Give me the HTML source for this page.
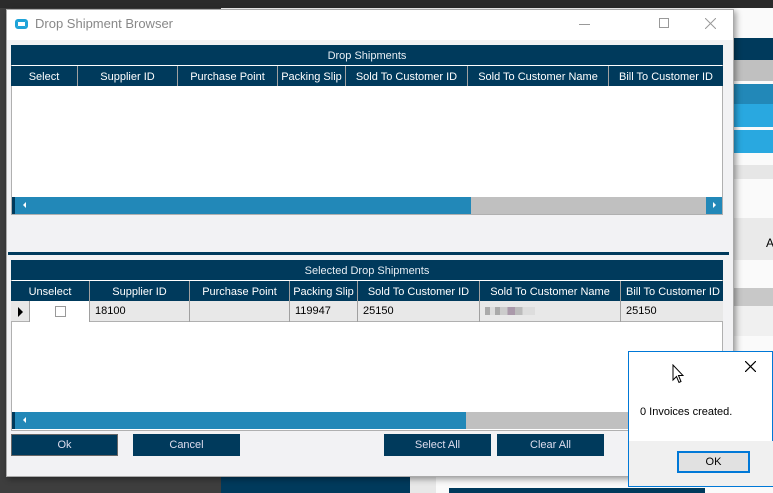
<!DOCTYPE html>
<html><head><style>
*{margin:0;padding:0;box-sizing:border-box}
body{width:773px;height:493px;overflow:hidden;position:relative;background:#3e3e3e;font-family:"Liberation Sans",Arial,sans-serif;font-size:11px}
.a{position:absolute}
.nav{background:#003a5c;color:#fff}
.hc{position:absolute;top:0;height:20px;line-height:22px;text-align:center;color:#fff;border-right:1px solid #a0a0a0;font-size:11px;white-space:nowrap;overflow:hidden}
.dc{position:absolute;top:0;height:21px;line-height:20px;border-right:1px solid #a0a0a0;padding-left:5px;font-size:11px;color:#000}
.btn{position:absolute;top:434px;height:22px;width:107px;background:#003a5c;color:#dde;text-align:center;line-height:23px;font-size:11px}
</style></head><body>
<div class="a" style="left:0;top:0;width:773px;height:8px;background:#2b2b2b"></div>
<div class="a" style="left:221px;top:8px;width:552px;height:485px;background:#fafafa"></div>
<div class="a" style="left:734px;top:38px;width:39px;height:22px;background:#003a5c"></div>
<div class="a" style="left:734px;top:60px;width:39px;height:21px;background:#c0c0c0"></div>
<div class="a" style="left:734px;top:84px;width:39px;height:20px;background:#2288b8"></div>
<div class="a" style="left:734px;top:104px;width:39px;height:23px;background:#29a8e0"></div>
<div class="a" style="left:734px;top:130px;width:39px;height:23px;background:#29a8e0"></div>
<div class="a" style="left:734px;top:165px;width:39px;height:14px;background:#e6e6e6"></div>
<div class="a" style="left:734px;top:218px;width:39px;height:42px;background:#eaeaea"></div>
<div class="a" style="left:766px;top:236px;font-size:12px">A</div>
<div class="a" style="left:734px;top:288px;width:39px;height:18px;background:#c8c8c8"></div>
<div class="a" style="left:734px;top:306px;width:39px;height:30px;background:#f0f0f0"></div>
<div class="a" style="left:449px;top:488px;width:256px;height:5px;background:#003a5c"></div>
<div class="a" style="left:221px;top:477px;width:190px;height:16px;background:#003a5c"></div>
<div class="a" style="left:410px;top:477px;width:26px;height:16px;background:#e8e8e8"></div>
<div class="a" style="left:6px;top:9px;width:728px;height:468px;background:#f2f2f4;border:1px solid #aaa;box-shadow:2px 2px 6px rgba(0,0,0,.4)"></div>
<div class="a" style="left:7px;top:10px;width:726px;height:30px;background:#fff"></div>
<div class="a" style="left:15px;top:19px;width:13px;height:10px;border-radius:3px;border:2px solid #1fa3d8;box-shadow:inset 0 0 0 1px #1fa3d8"></div>
<div class="a" style="left:35px;top:16px;font-size:13px;color:#888">Drop Shipment Browser</div>
<div class="a" style="left:579px;top:24px;width:11px;height:1px;background:#999"></div>
<div class="a" style="left:659px;top:18px;width:10px;height:10px;border:1px solid #999"></div>
<svg class="a" style="left:705px;top:18px" width="11" height="11"><path d="M0 0L11 11M11 0L0 11" stroke="#999" stroke-width="1"/></svg>
<div class="a" style="left:11px;top:45px;width:712px;height:170px;background:#fff;border:1px solid #b0b0b0"></div>
<div class="a nav" style="left:11px;top:45px;width:712px;height:20px;line-height:22px;text-align:center;color:#e8eef4">Drop Shipments</div>
<div class="a nav" style="left:11px;top:66px;width:712px;height:20px">
<div class="hc" style="left:0;width:67px">Select</div>
<div class="hc" style="left:67px;width:100px">Supplier ID</div>
<div class="hc" style="left:167px;width:100px">Purchase Point</div>
<div class="hc" style="left:267px;width:68px">Packing Slip</div>
<div class="hc" style="left:335px;width:122px">Sold To Customer ID</div>
<div class="hc" style="left:457px;width:141px">Sold To Customer Name</div>
<div class="hc" style="left:598px;width:114px;border:none">Bill To Customer ID</div>
</div>
<div class="a" style="left:12px;top:197px;width:710px;height:17px;background:#c0c0c0"></div>
<div class="a" style="left:12px;top:197px;width:459px;height:17px;background:#2288b8;border-left:3px solid #003a5c"></div>
<div class="a" style="left:23px;top:202px;width:0;height:0;border-top:3px solid transparent;border-bottom:3px solid transparent;border-right:3px solid #fff"></div>
<div class="a" style="left:706px;top:197px;width:16px;height:17px;background:#2288b8"></div>
<div class="a" style="left:713px;top:202px;width:0;height:0;border-top:3px solid transparent;border-bottom:3px solid transparent;border-left:3px solid #fff"></div>
<div class="a" style="left:8px;top:252px;width:721px;height:3px;background:#003a5c"></div>
<div class="a" style="left:11px;top:260px;width:712px;height:171px;background:#fff;border:1px solid #b0b0b0"></div>
<div class="a nav" style="left:11px;top:260px;width:712px;height:20px;line-height:22px;text-align:center;color:#e8eef4">Selected Drop Shipments</div>
<div class="a nav" style="left:11px;top:281px;width:712px;height:20px">
<div class="hc" style="left:0;width:79px">Unselect</div>
<div class="hc" style="left:79px;width:100px">Supplier ID</div>
<div class="hc" style="left:179px;width:100px">Purchase Point</div>
<div class="hc" style="left:279px;width:68px">Packing Slip</div>
<div class="hc" style="left:347px;width:122px">Sold To Customer ID</div>
<div class="hc" style="left:469px;width:141px">Sold To Customer Name</div>
<div class="hc" style="left:610px;width:102px;border:none;text-align:left;padding-left:5px">Bill To Customer ID</div>
</div>
<div class="a" style="left:11px;top:301px;width:712px;height:21px;background:#e8e8e8;border-bottom:1px solid #b0b0b0">
<div class="dc" style="left:0;width:19px"></div>
<div class="a" style="left:7px;top:6px;width:0;height:0;border-top:5px solid transparent;border-bottom:5px solid transparent;border-left:5px solid #000"></div>
<div class="dc" style="left:19px;width:60px;background:#fff"></div>
<div class="a" style="left:44px;top:5px;width:11px;height:11px;border:1px solid #999;background:#fff"></div>
<div class="dc" style="left:79px;width:100px">18100</div>
<div class="dc" style="left:179px;width:100px"></div>
<div class="dc" style="left:279px;width:68px">119947</div>
<div class="dc" style="left:347px;width:122px">25150</div>
<div class="dc" style="left:469px;width:141px"><span style="display:inline-block;margin-top:6px;width:50px;height:8px;background:linear-gradient(90deg,#aaa 0 10%,#ddd 10% 20%,#aaa 20% 30%,#ccc 30% 45%,#a9a 45% 60%,#bbb 60% 75%,#ddd 75%)"></span></div>
<div class="dc" style="left:610px;width:102px;border:none">25150</div>
</div>
<div class="a" style="left:12px;top:412px;width:710px;height:17px;background:#c0c0c0"></div>
<div class="a" style="left:12px;top:412px;width:454px;height:17px;background:#2288b8;border-left:3px solid #003a5c"></div>
<div class="a" style="left:23px;top:417px;width:0;height:0;border-top:3px solid transparent;border-bottom:3px solid transparent;border-right:3px solid #fff"></div>
<div class="btn" style="left:11px;border:1px solid #666;line-height:21px">Ok</div>
<div class="btn" style="left:133px">Cancel</div>
<div class="btn" style="left:384px">Select All</div>
<div class="btn" style="left:497px">Clear All</div>
<div class="a" style="left:628px;top:351px;width:145px;height:136px;background:#fff;border:1px solid #0078d7"></div>
<div class="a" style="left:629px;top:441px;width:144px;height:45px;background:#f0f0f0"></div>
<svg class="a" style="left:745px;top:361px" width="11" height="11"><path d="M0 0L11 11M11 0L0 11" stroke="#000" stroke-width="1.2"/></svg>
<svg class="a" style="left:672px;top:364px" width="12" height="20"><path d="M1 1L1 16L4.5 12.5L7 18.5L9 17.5L6.5 11.5L11 11.5Z" fill="#fff" stroke="#000" stroke-width="1"/></svg>
<div class="a" style="left:640px;top:406px;font-size:11px;color:#000">0 Invoices created.</div>
<div class="a" style="left:677px;top:451px;width:73px;height:22px;background:#e1e1e1;border:2px solid #0078d7;text-align:center;line-height:18px;font-size:11px">OK</div>
</body></html>
